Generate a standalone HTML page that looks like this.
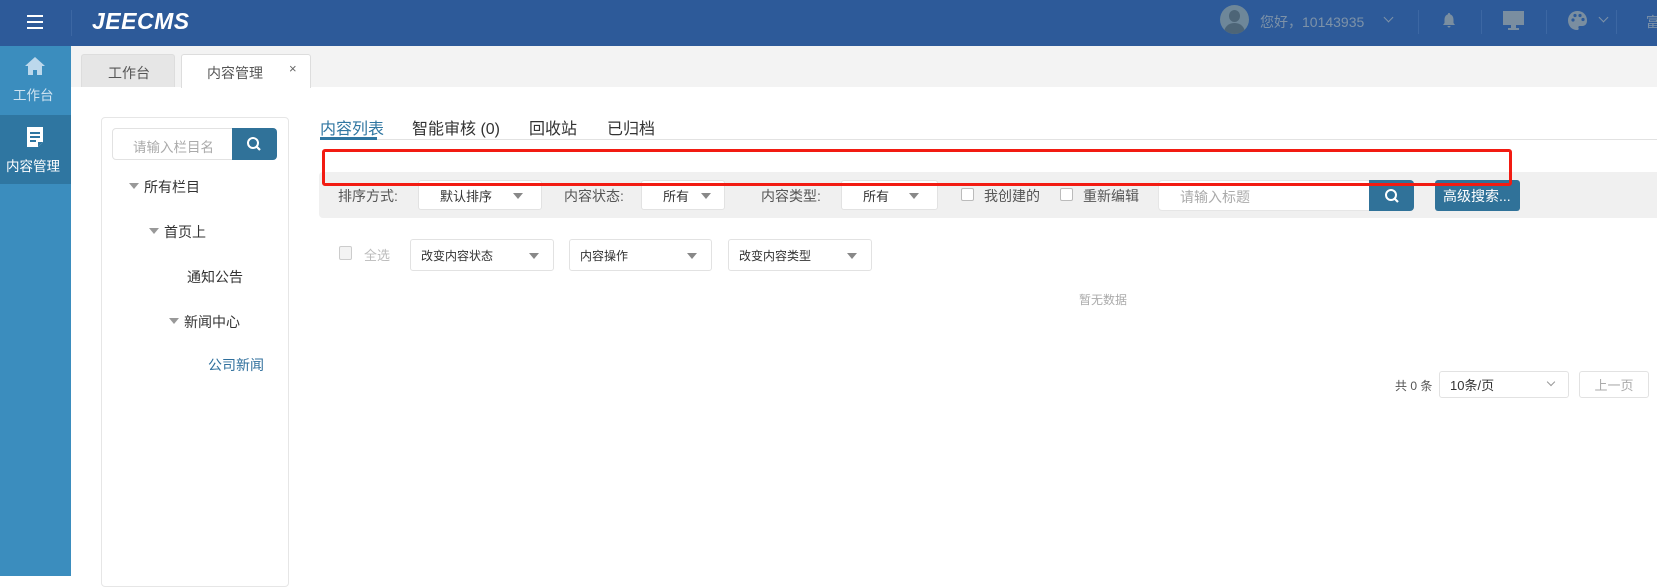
<!DOCTYPE html>
<html><head><meta charset="utf-8"><style>
*{margin:0;padding:0;box-sizing:border-box}
body{width:1657px;height:576px;overflow:hidden;background:#fff;font-family:"Liberation Sans","Noto Sans CJK SC",sans-serif;position:relative;color:#333}
.a{position:absolute}
.hd{left:0;top:0;width:1657px;height:46px;background:#2d5a99}
.sb{left:0;top:46px;width:71px;height:530px;background:#3b8dbe}
.sel{border:1px solid #e2e2e2;background:#fff;border-radius:3px;font-size:13px;color:#333;display:flex;align-items:center;white-space:nowrap}
.tri{position:absolute;width:0;height:0;border-left:5px solid transparent;border-right:5px solid transparent;border-top:6px solid #888}
.cb{width:13px;height:13px;border:1px solid #bbb;border-radius:2px;background:#fff}
.t{font-size:14px;white-space:nowrap}
</style></head><body>
<div class="a hd"></div>
<div class="a" style="left:27px;top:15px;width:16px;height:2px;background:#fff;box-shadow:0 6px 0 #fff,0 12px 0 #fff"></div>
<div class="a" style="left:71px;top:10px;width:1px;height:26px;background:#3c67a3"></div>
<div class="a" style="left:92px;top:8px;font-size:23px;font-weight:bold;font-style:italic;color:#fff;letter-spacing:0.5px">JEECMS</div>
<div class="a" style="left:1220px;top:5px;width:29px;height:29px;border-radius:50%;background:#6e8799;overflow:hidden"><div class="a" style="left:9px;top:5px;width:11px;height:12px;border-radius:50%;background:#4d6577"></div><div class="a" style="left:4px;top:18px;width:21px;height:16px;border-radius:10px 10px 0 0;background:#4d6577"></div></div>
<div class="a t" style="left:1260px;top:12px;color:#7d92a8;font-size:14px">您好，10143935</div>
<div class="a" style="left:1385px;top:14px;width:7px;height:7px;border-right:1px solid #7d92a8;border-bottom:1px solid #7d92a8;transform:rotate(45deg)"></div>
<div class="a" style="left:1418px;top:10px;width:1px;height:24px;background:#3c67a3"></div>
<svg class="a" style="left:1442px;top:12px" width="14" height="16" viewBox="0 0 14 16"><path d="M7 1a1 1 0 0 1 1 1.2C10.5 3 11.5 5 11.5 8v3l1.5 2H1l1.5-2V8C2.5 5 3.5 3 6 2.2A1 1 0 0 1 7 1z M5.5 14h3a1.5 1.5 0 0 1-3 0z" fill="#7a8ea0"/></svg>
<div class="a" style="left:1481px;top:10px;width:1px;height:24px;background:#3c67a3"></div>
<svg class="a" style="left:1503px;top:11px" width="21" height="20" viewBox="0 0 21 20"><rect x="0" y="0" width="21" height="14" fill="#7a8ea0"/><rect x="8" y="14" width="5" height="3" fill="#7a8ea0"/><rect x="5" y="17" width="11" height="2" fill="#7a8ea0"/></svg>
<div class="a" style="left:1546px;top:10px;width:1px;height:24px;background:#3c67a3"></div>
<svg class="a" style="left:1567px;top:10px" width="21" height="21" viewBox="0 0 21 21"><path d="M10.5 1C5 1 1 5 1 10.5S5 20 10 20c1.5 0 2-1 1.5-2s0-2 1.5-2h2.5C18 16 20 14 20 10.5 20 5 16 1 10.5 1z" fill="#7a8ea0"/><circle cx="6" cy="10" r="1.6" fill="#2d5a99"/><circle cx="8" cy="5.5" r="1.6" fill="#2d5a99"/><circle cx="13" cy="5.5" r="1.6" fill="#2d5a99"/><circle cx="16" cy="9.5" r="1.6" fill="#2d5a99"/></svg>
<div class="a" style="left:1600px;top:14px;width:7px;height:7px;border-right:1px solid #7d92a8;border-bottom:1px solid #7d92a8;transform:rotate(45deg)"></div>
<div class="a" style="left:1616px;top:10px;width:1px;height:24px;background:#3c67a3"></div>
<div class="a t" style="left:1646px;top:12px;color:#7d92a8">富</div>

<div class="a sb"></div>
<div class="a" style="left:0;top:115px;width:71px;height:69px;background:#2f76a1"></div>
<svg class="a" style="left:25px;top:57px" width="20" height="18" viewBox="0 0 20 18"><path d="M10 0L0 9h3v9h5v-5h4v5h5V9h3z" fill="#bcd8ec"/></svg>
<div class="a t" style="left:13px;top:84px;color:#cfe3f1;font-size:13.5px">工作台</div>
<svg class="a" style="left:26px;top:127px" width="18" height="20" viewBox="0 0 18 20"><path d="M1 0h16v15l-5 5H1z" fill="#fff"/><rect x="4" y="5" width="10" height="2" fill="#2f76a1"/><rect x="4" y="9" width="10" height="2" fill="#2f76a1"/><rect x="4" y="13" width="6" height="2" fill="#2f76a1"/><path d="M12 20l5-5h-5z" fill="#2f76a1"/></svg>
<div class="a t" style="left:6px;top:155px;color:#fff;font-size:13.5px">内容管理</div>

<div class="a" style="left:71px;top:46px;width:1586px;height:41px;background:#f3f3f3"></div>
<div class="a" style="left:81px;top:54px;width:94px;height:33px;background:#e6e6e6;border:1px solid #ddd;border-bottom:none;border-radius:3px 3px 0 0"></div>
<div class="a t" style="left:108px;top:63px;color:#555">工作台</div>
<div class="a" style="left:181px;top:54px;width:130px;height:34px;background:#fff;border:1px solid #ddd;border-bottom:none;border-radius:3px 3px 0 0"></div>
<div class="a t" style="left:207px;top:63px;color:#555">内容管理</div>
<div class="a" style="left:289px;top:61px;font-size:13px;color:#666">×</div>

<div class="a" style="left:101px;top:117px;width:188px;height:470px;border:1px solid #e6e6e6;border-radius:4px"></div>
<div class="a" style="left:112px;top:128px;width:121px;height:32px;border:1px solid #e2e2e2;border-radius:4px 0 0 4px"></div>
<div class="a t" style="left:133px;top:136px;color:#aaa;font-size:13.5px">请输入栏目名</div>
<div class="a" style="left:232px;top:128px;width:45px;height:32px;background:#307299;border-radius:0 4px 4px 0"></div>
<svg class="a" style="left:246px;top:136px" width="16" height="16" viewBox="0 0 16 16"><circle cx="7" cy="7" r="5" fill="none" stroke="#fff" stroke-width="2"/><path d="M10.5 10.5L14 14" stroke="#fff" stroke-width="2.2"/></svg>
<div class="a tri" style="left:129px;top:183px;border-top-color:#999"></div>
<div class="a t" style="left:144px;top:177px">所有栏目</div>
<div class="a tri" style="left:149px;top:228px;border-top-color:#999"></div>
<div class="a t" style="left:164px;top:222px">首页上</div>
<div class="a t" style="left:187px;top:267px">通知公告</div>
<div class="a tri" style="left:169px;top:318px;border-top-color:#999"></div>
<div class="a t" style="left:184px;top:312px">新闻中心</div>
<div class="a t" style="left:208px;top:355px;color:#2f6f9c">公司新闻</div>

<div class="a" style="left:320px;top:139px;width:1337px;height:1px;background:#e2e2e2"></div>
<div class="a" style="left:320px;top:137px;width:57px;height:3px;background:#2f76a1"></div>
<div class="a t" style="left:320px;top:115px;font-size:16px;color:#2f76a1">内容列表</div>
<div class="a t" style="left:412px;top:115px;font-size:16px">智能审核 (0)</div>
<div class="a t" style="left:529px;top:115px;font-size:16px">回收站</div>
<div class="a t" style="left:607px;top:115px;font-size:16px">已归档</div>

<div class="a" style="left:319px;top:172px;width:1338px;height:46px;background:#f0f0f0;border-radius:4px 0 0 4px"></div>
<div class="a t" style="left:338px;top:186px;color:#555">排序方式:</div>
<div class="a sel" style="left:418px;top:180px;width:124px;height:30px"><span style="margin-left:21px">默认排序</span><span class="tri" style="right:18px;top:12px"></span></div>
<div class="a t" style="left:564px;top:186px;color:#555">内容状态:</div>
<div class="a sel" style="left:641px;top:180px;width:84px;height:30px"><span style="margin-left:21px">所有</span><span class="tri" style="right:13px;top:12px"></span></div>
<div class="a t" style="left:761px;top:186px;color:#555">内容类型:</div>
<div class="a sel" style="left:841px;top:180px;width:97px;height:30px"><span style="margin-left:21px">所有</span><span class="tri" style="right:18px;top:12px"></span></div>
<div class="a cb" style="left:961px;top:188px"></div>
<div class="a t" style="left:984px;top:186px;color:#555">我创建的</div>
<div class="a cb" style="left:1060px;top:188px"></div>
<div class="a t" style="left:1083px;top:186px;color:#555">重新编辑</div>
<div class="a" style="left:1158px;top:180px;width:212px;height:31px;background:#fff;border:1px solid #e6e6e6;border-radius:4px 0 0 4px"></div>
<div class="a t" style="left:1180px;top:187px;color:#aaa">请输入标题</div>
<div class="a" style="left:1369px;top:180px;width:45px;height:31px;background:#307299;border-radius:0 4px 4px 0"></div>
<svg class="a" style="left:1384px;top:188px" width="16" height="16" viewBox="0 0 16 16"><circle cx="7" cy="7" r="5" fill="none" stroke="#fff" stroke-width="2"/><path d="M10.5 10.5L14 14" stroke="#fff" stroke-width="2.2"/></svg>
<div class="a" style="left:1435px;top:180px;width:85px;height:31px;background:#307299;border-radius:3px"></div>
<div class="a t" style="left:1443px;top:186px;color:#fff">高级搜索...</div>

<div class="a" style="left:322px;top:149px;width:1190px;height:37px;border:3px solid #f21b12;border-radius:3px"></div>

<div class="a cb" style="left:339px;top:246px;background:#f3f3f3;border-color:#ccc;height:14px"></div>
<div class="a t" style="left:364px;top:245px;color:#bbb;font-size:13px">全选</div>
<div class="a sel" style="left:410px;top:239px;width:144px;height:32px;font-size:12px"><span style="margin-left:10px">改变内容状态</span><span class="tri" style="right:14px;top:13px"></span></div>
<div class="a sel" style="left:569px;top:239px;width:143px;height:32px;font-size:12px"><span style="margin-left:10px">内容操作</span><span class="tri" style="right:14px;top:13px"></span></div>
<div class="a sel" style="left:728px;top:239px;width:144px;height:32px;font-size:12px"><span style="margin-left:10px">改变内容类型</span><span class="tri" style="right:14px;top:13px"></span></div>
<div class="a" style="left:1079px;top:291px;font-size:12px;color:#aaa;white-space:nowrap">暂无数据</div>

<div class="a" style="left:1395px;top:377px;font-size:12px;color:#555;white-space:nowrap">共 0 条</div>
<div class="a sel" style="left:1439px;top:371px;width:130px;height:27px"><span style="margin-left:10px">10条/页</span></div>
<div class="a" style="left:1548px;top:379px;width:6px;height:6px;border-right:1px solid #999;border-bottom:1px solid #999;transform:rotate(45deg)"></div>
<div class="a sel" style="left:1579px;top:371px;width:70px;height:27px;color:#aaa;justify-content:center">上一页</div>
</body></html>
